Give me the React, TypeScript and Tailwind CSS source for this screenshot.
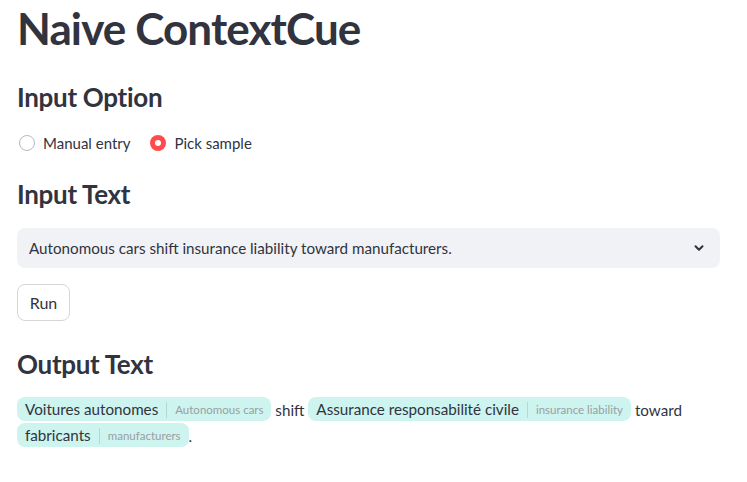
import React, { useState } from 'react';

const font = { fontFamily: "'Source Sans Pro', Lato, 'Noto Sans', sans-serif" };

type Span = { text: string; label?: string };

const output: Span[] = [
  { text: 'Voitures autonomes', label: 'Autonomous cars' },
  { text: ' shift ' },
  { text: 'Assurance responsabilité civile', label: 'insurance liability' },
  { text: ' toward ' },
  { text: 'fabricants', label: 'manufacturers' },
  { text: '.' },
];

const Radio = ({ label, checked, onClick }: { label: string; checked: boolean; onClick: () => void }) => (
  <button type="button" onClick={onClick} className="flex items-center gap-[8px] h-[24px]">
    {checked ? (
      <span className="w-[16px] h-[16px] rounded-full bg-[#ff4b4b] flex items-center justify-center">
        <span className="w-[6px] h-[6px] rounded-full bg-white" />
      </span>
    ) : (
      <span className="w-[16px] h-[16px] rounded-full border border-[#b8b9be] bg-white" />
    )}
    <span className="text-[15px] text-[#31333f]">{label}</span>
  </button>
);

export default function App() {
  const [mode, setMode] = useState('sample');

  return (
    <div className="min-h-screen bg-white text-[#31333f]" style={font}>
      <div className="pl-[17px] pt-[2px] w-[720px]">
        <h1 className="text-[44px] leading-[53px] font-bold tracking-[-0.9px]">Naive ContextCue</h1>

        <h3 className="mt-[25px] text-[26px] leading-[34px] font-bold tracking-[-0.3px]">Input Option</h3>
        <div className="mt-[17px] flex items-center gap-[20px] pl-[2px]">
          <Radio label="Manual entry" checked={mode === 'manual'} onClick={() => setMode('manual')} />
          <Radio label="Pick sample" checked={mode === 'sample'} onClick={() => setMode('sample')} />
        </div>

        <h3 className="mt-[22px] text-[26px] leading-[34px] font-bold tracking-[-0.3px]">Input Text</h3>
        <div className="mt-[17px] h-[40px] rounded-[8px] bg-[#f0f2f6] flex items-center justify-between pl-[12px] pr-[14px]">
          <span className="text-[15.2px]">Autonomous cars shift insurance liability toward manufacturers.</span>
          <svg width="14" height="14" viewBox="0 0 24 24" fill="none" stroke="#31333f" strokeWidth="3.5" strokeLinecap="round" strokeLinejoin="round">
            <path d="M6 9l6 6 6-6" />
          </svg>
        </div>

        <button type="button" className="mt-[16px] h-[37px] w-[53px] rounded-[8px] border border-[#d6d6d9] bg-white text-[16px]">
          Run
        </button>

        <h3 className="mt-[26px] text-[26px] leading-[34px] font-bold tracking-[-0.3px]">Output Text</h3>
        <div className="mt-[16px] text-[15.2px] leading-[26px]">
          {output.map((s, i) =>
            s.label ? (
              <span key={i} className="inline-block align-top rounded-[8px] bg-[#cdf4ee] leading-[24px] px-[8px]">
                {s.text}
                <span className="inline-block align-middle ml-[8px] pl-[8px] mb-[2px] border-l border-[#b5d9d4] text-[11.5px] leading-[16px] text-[#9a9ea4]">
                  {s.label}
                </span>
              </span>
            ) : (
              <React.Fragment key={i}>{s.text}</React.Fragment>
            )
          )}
        </div>
      </div>
    </div>
  );
}
